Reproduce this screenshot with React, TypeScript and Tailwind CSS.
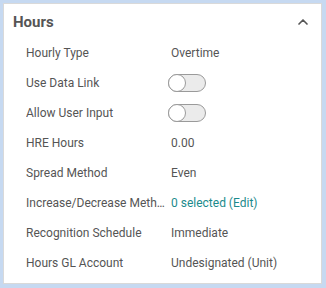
import { ChevronUp } from 'lucide-react'

function Toggle() {
  return (
    <div className="relative ml-[-3px] h-[18px] w-[38px] rounded-full border border-[#9a9a9a] bg-[#ebebeb]">
      <div className="absolute left-[-1px] top-[-1px] h-[18px] w-[18px] rounded-full border border-[#9a9a9a] bg-white" />
    </div>
  )
}

function Row({ label, children }: { label: string; children: React.ReactNode }) {
  return (
    <div className="flex h-[30px] items-center">
      <span className="w-[145px] truncate pr-1 text-[#555]">{label}</span>
      <span className="flex-1 text-[#555]">{children}</span>
    </div>
  )
}

export default function App() {
  return (
    <div className="h-[288px] w-[326px] bg-[#c6d9f1] pb-[4px] pl-[3px] pr-[4px] pt-[3px]" style={{ fontFamily: 'Roboto, sans-serif' }}>
      <div className="flex h-full flex-col border border-[#d9d9d9] bg-white">
        <div className="flex h-[34px] items-center justify-between pl-[9px] pr-[10px] pt-[2px]">
          <span className="text-[15px] font-bold text-[#555]">Hours</span>
          <ChevronUp size={16} strokeWidth={2.5} className="text-[#555]" />
        </div>
        <div className="flex flex-col pl-[22px] text-[12px]">
          <Row label="Hourly Type">Overtime</Row>
          <Row label="Use Data Link"><Toggle /></Row>
          <Row label="Allow User Input"><Toggle /></Row>
          <Row label="HRE Hours">0.00</Row>
          <Row label="Spread Method">Even</Row>
          <Row label="Increase/Decrease Method">
            <span className="text-[#1b8a8c]">0 selected (Edit)</span>
          </Row>
          <Row label="Recognition Schedule">Immediate</Row>
          <Row label="Hours GL Account">Undesignated (Unit)</Row>
        </div>
      </div>
    </div>
  )
}
